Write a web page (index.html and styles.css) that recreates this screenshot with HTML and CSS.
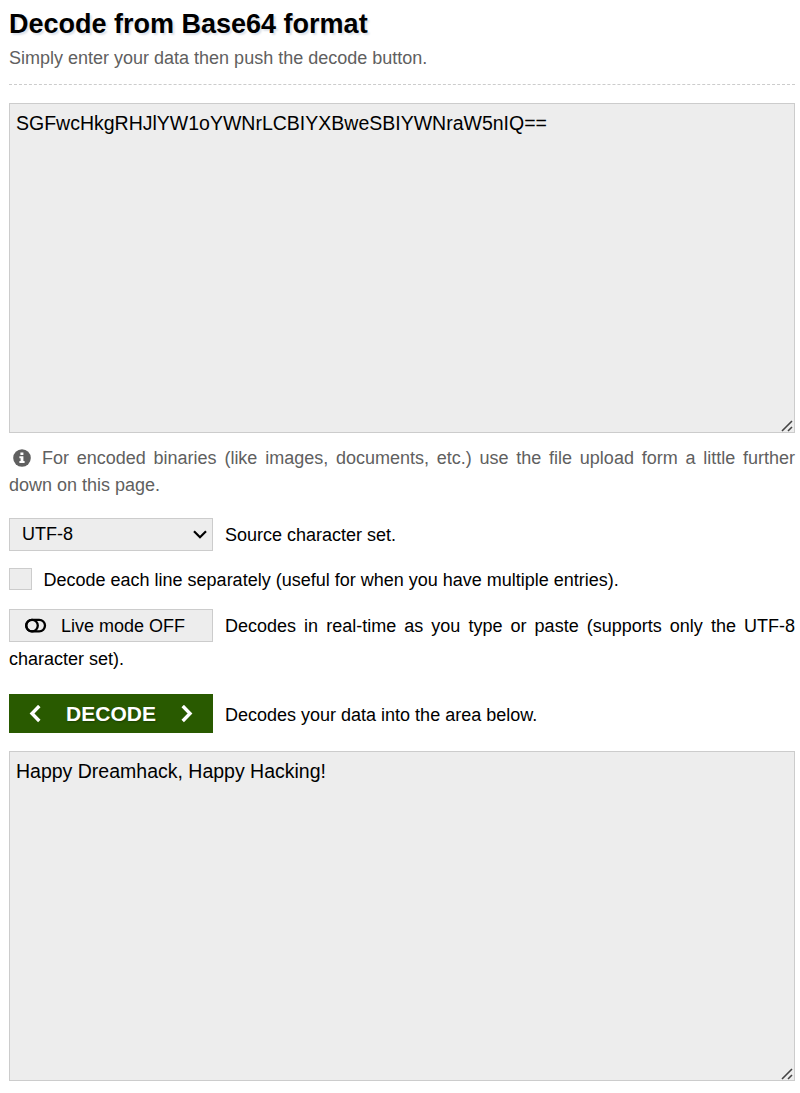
FILE: index.html
```html
<!DOCTYPE html>
<html lang="en">
<head>
    <meta charset="UTF-8">
    <meta name="viewport" content="width=device-width, initial-scale=1.0">
    <title>Base64 Decode</title>
    <link rel="stylesheet" href="styles.css">
</head>
<body>
    <div class="cont">
        <header class="head">
            <h1>Decode from Base64 format</h1>
            <p>Simply enter your data then push the decode button.</p>
        </header>
        <form id="decodeform">
            <div class="area">
                <textarea id="input" spellcheck="false">SGFwcHkgRHJlYW1oYWNrLCBIYXBweSBIYWNraW5nIQ==</textarea>
                <svg class="grip" viewBox="0 0 12 12"><path d="M1 11L11 1M7 11L11 7"/></svg>
            </div>
            <p class="info"><svg class="infoicon" viewBox="0 0 18 18"><circle cx="9" cy="9" r="8.8" fill="#606060"/><path d="M7.4 3.4h3v2.5h-3zM6.4 7.3h4v4.7h1.2v1.9H6.4V12h1.2V9.2H6.4z" fill="#fff"/></svg>For encoded binaries (like images, documents, etc.) use the file upload form a little further down on this page.</p>
            <div class="row charset">
                <div class="selectbox">
                    <select id="charset">
                        <option>UTF-8</option>
                    </select>
                    <svg class="arrow" viewBox="0 0 14 9"><path d="M1 1.2l6 6 6-6"/></svg>
                </div>
                <label for="charset">Source character set.</label>
            </div>
            <div class="row lines">
                <input type="checkbox" id="separate">
                <label for="separate">Decode each line separately (useful for when you have multiple entries).</label>
            </div>
            <div class="live">
                <button type="button" class="livebutton"><svg viewBox="0 0 22 16"><rect x="1.2" y="1.8" width="18.8" height="11.6" rx="5.8"/><ellipse cx="7" cy="7.6" rx="5.8" ry="5.8"/></svg>Live mode OFF</button>Decodes in real-time as you type or paste (supports only the UTF-8 character set).
            </div>
            <div class="row decode">
                <button type="submit" class="submit">
                    <svg viewBox="0 0 12 18"><path d="M10.3 1L3 8.5l7.3 7.5"/></svg>
                    <span>DECODE</span>
                    <svg viewBox="0 0 12 18"><path d="M1.7 1L9 8.5 1.7 16"/></svg>
                </button>
                <label>Decodes your data into the area below.</label>
            </div>
            <div class="area">
                <textarea id="output" spellcheck="false">Happy Dreamhack, Happy Hacking!</textarea>
                <svg class="grip" viewBox="0 0 12 12"><path d="M1 11L11 1M7 11L11 7"/></svg>
            </div>
        </form>
    </div>

    <script>
        var form = document.getElementById("decodeform");
        var input = document.getElementById("input");
        var output = document.getElementById("output");

        form.addEventListener("submit", function(event) {
            event.preventDefault();
            output.value = atob(input.value.trim());
        });
    </script>
</body>
</html>
```
FILE: styles.css
```css
*{
    box-sizing: border-box;
}
body{
    margin: 0;
    background-color: #fff;
    color: #000;
    font-family: "Liberation Sans", Arial, sans-serif;
    font-size: 18px;
}
.cont{
    padding: 8px 5px 0 9px;
}
.head{
    height: 77px;
    border-bottom: 1px dashed #ccc;
}
h1{
    margin: 0;
    font-size: 27px;
    line-height: 32px;
    text-shadow: 2px 2px 2px #dde2ea;
}
.head p{
    margin: 5px 0 0;
    line-height: 27px;
    color: #606060;
}

.area{
    position: relative;
    height: 330px;
}
#decodeform{
    padding-top: 18px;
}
textarea{
    display: block;
    width: 100%;
    height: 330px;
    margin: 0;
    padding: 6px;
    border: 1px solid #ccc;
    border-radius: 0;
    outline: none;
    resize: none;
    background-color: #ededed;
    color: #000;
    font-family: inherit;
    font-size: 19.5px;
    line-height: 26px;
}
.grip{
    position: absolute;
    right: 2px;
    bottom: 1px;
    width: 12px;
    height: 12px;
    fill: none;
    stroke: #444;
    stroke-width: 1.6;
}

.info{
    margin: 12px 0 19px;
    line-height: 27px;
    color: #606060;
    text-align: justify;
}
.infoicon{
    width: 18px;
    height: 18px;
    margin: 0 11px 0 4px;
    vertical-align: -3px;
}

.row{
    display: flex;
    align-items: center;
}
.row label{
    padding-top: 2px;
}
.selectbox{
    position: relative;
    width: 204px;
    height: 33px;
    margin-right: 12px;
}
select{
    width: 100%;
    height: 100%;
    padding: 0 12px 2px;
    appearance: none;
    border: 1px solid #ccc;
    border-radius: 0;
    background-color: #ededed;
    color: #000;
    font-family: inherit;
    font-size: 18px;
}
.arrow{
    position: absolute;
    right: 6px;
    top: 12px;
    width: 14px;
    height: 9px;
    fill: none;
    stroke: #000;
    stroke-width: 2.2;
    pointer-events: none;
}
.lines{
    height: 22px;
    margin: 17px 0 19px;
}
.lines input{
    width: 23px;
    height: 22px;
    margin: 0 11.5px 0 0;
    appearance: none;
    border: 1px solid #ccc;
    background-color: #ededed;
}

.live{
    height: 66px;
    padding-top: 1px;
    line-height: 33px;
    text-align: justify;
}
.livebutton{
    display: inline-flex;
    align-items: center;
    width: 204px;
    height: 33px;
    margin: -1px 12px 0 0;
    padding: 1px 0 0 15px;
    border: 1px solid #ccc;
    background-color: #ededed;
    color: #000;
    font-family: inherit;
    font-size: 18px;
    line-height: 31px;
    vertical-align: top;
}
.livebutton svg{
    width: 22px;
    height: 16px;
    margin-right: 14px;
    fill: none;
    stroke: #000;
    stroke-width: 2.3;
}

.decode{
    height: 39px;
    margin: 19px 0 18px;
}
.decode label{
    padding-top: 4px;
}
.submit{
    display: flex;
    align-items: center;
    justify-content: space-between;
    width: 204px;
    height: 39px;
    margin-right: 12px;
    padding: 0 20px;
    border: none;
    background-color: #295a00;
    color: #fff;
    font-family: inherit;
    font-size: 21px;
    font-weight: 700;
    text-shadow: 1px 1px 2px #1b3f00;
}
.submit svg{
    width: 12px;
    height: 18px;
    fill: none;
    stroke: #fff;
    stroke-width: 3.4;
}
```
